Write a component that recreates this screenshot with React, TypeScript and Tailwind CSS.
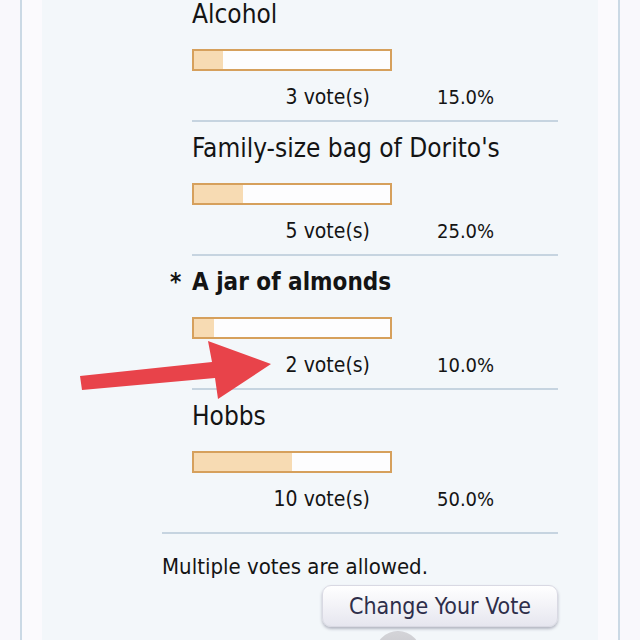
import React from 'react';

type Option = {
  label: string;
  votes: number;
  pct: number;
  mine?: boolean;
};

const options: Option[] = [
  { label: 'Alcohol', votes: 3, pct: 15 },
  { label: "Family-size bag of Dorito's", votes: 5, pct: 25 },
  { label: 'A jar of almonds', votes: 2, pct: 10, mine: true },
  { label: 'Hobbs', votes: 10, pct: 50 },
];

const font = {
  fontFamily: "'DejaVu Sans Condensed', 'DejaVu Sans', sans-serif",
};

const PollRow: React.FC<{ option: Option; last: boolean }> = ({ option, last }) => (
  <div className="pl-[30px]">
    <div className="flex h-[28px] items-center text-[26px] leading-[28px] text-[#141414]">
      {option.mine ? (
        <>
          <span className="-ml-[22px] w-[22px] font-bold text-[24px]">*</span>
          <span className="font-bold text-[24px]">{option.label}</span>
        </>
      ) : (
        <span>{option.label}</span>
      )}
    </div>
    <div className="mt-[21px] h-[22px] w-[200px] border-2 border-[#d6a05c] bg-[#fdfdfe]">
      <div className="h-full bg-[#f7dbb3]" style={{ width: `${option.pct}%` }} />
    </div>
    <div className="mt-[14px] flex h-[24px] items-center leading-[24px] text-[#141414]">
      <span className="w-[178px] text-right text-[21px]">{option.votes} vote(s)</span>
      <span className="ml-[67px] text-[20px]">{option.pct.toFixed(1)}%</span>
    </div>
    {!last && <div className="mt-[11px] mb-[12px] h-[2px] bg-[#c6d4e0]" />}
  </div>
);

const App: React.FC = () => {
  return (
    <div className="relative h-[640px] w-[640px] overflow-hidden bg-[#f9f8fc]" style={font}>
      <div className="ml-[20px] mr-[20px] h-full border-x-2 border-[#cbd9e5] bg-[#fbfafd] px-[20px]">
        <div className="h-full bg-[#f3f7fa] pl-[120px] pr-[40px]">
          {options.map((o, i) => (
            <PollRow key={o.label} option={o} last={i === options.length - 1} />
          ))}
          <div className="mt-[21px] h-[2px] bg-[#c6d4e0]" />
          <p className="mt-[21px] text-[22px] leading-[24px] text-[#141414]">
            Multiple votes are allowed.
          </p>
          <div className="mt-[6px] flex justify-end">
            <button className="h-[42px] w-[236px] rounded-[9px] border border-[#d9d9e3] bg-gradient-to-b from-[#ffffff] to-[#e6e6ef] text-[23px] text-[#2e2e4a] shadow-[0_2px_3px_rgba(60,60,90,0.35)]">
              Change Your Vote
            </button>
          </div>
          <div className="ml-[213px] mt-[4px] h-[46px] w-[46px] rounded-full bg-gradient-to-b from-[#d4d4d8] to-[#bcbcc2]" />
        </div>
      </div>
      <svg className="pointer-events-none absolute left-0 top-0" width="640" height="640">
        <polygon
          points="80,376 212,362 208,341 271,364 218,399 215,378 82,390"
          fill="#e8434a"
        />
      </svg>
    </div>
  );
};

export default App;
